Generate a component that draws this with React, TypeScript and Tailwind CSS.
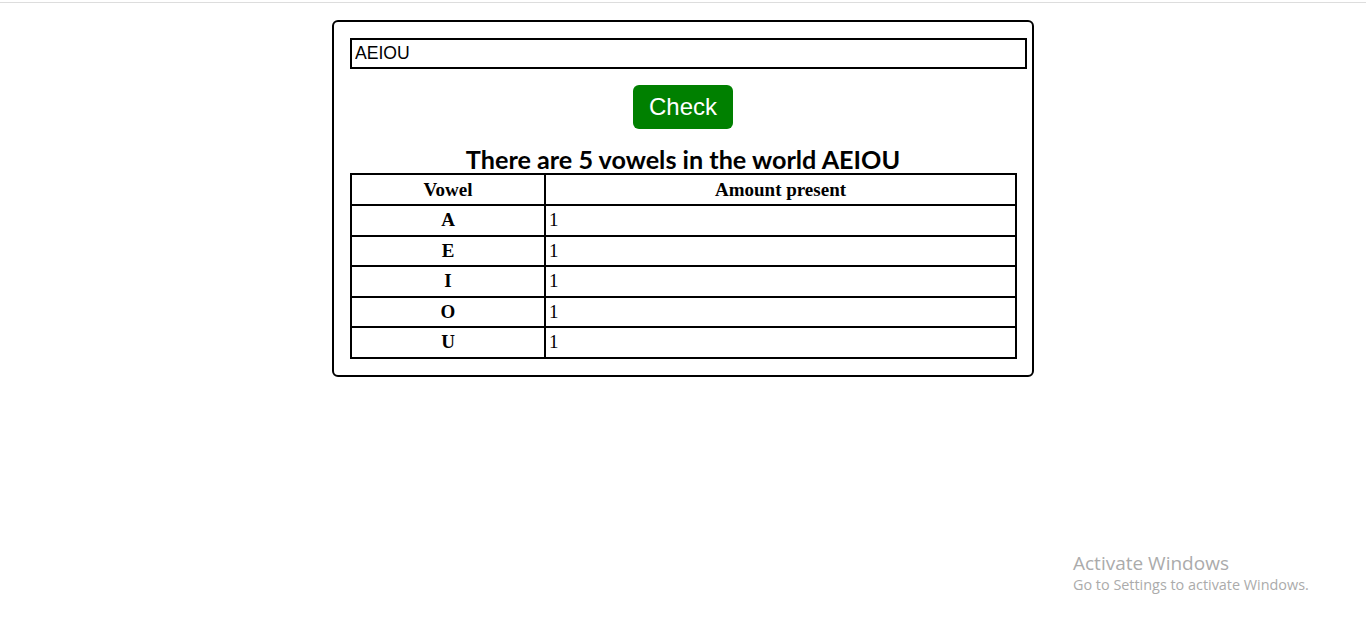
import React, { useState } from 'react';

const countVowels = (word: string) => {
  const vowels = ['A', 'E', 'I', 'O', 'U'];
  const upper = word.toUpperCase();
  return vowels.map(v => ({ vowel: v, count: upper.split('').filter(c => c === v).length }));
};

const App: React.FC = () => {
  const [word, setWord] = useState('AEIOU');
  const [checked, setChecked] = useState('AEIOU');
  const rows = countVowels(checked);
  const total = rows.reduce((s, r) => s + r.count, 0);

  return (
    <div className="relative min-h-[622px] w-full bg-white">
      <div className="h-[3px] border-b border-[#dddddd]"></div>

      <div className="mx-auto mt-[17px] w-[702px] rounded-[6px] border-2 border-black bg-white p-4 pr-[5px]">
        <input
          value={word}
          onChange={e => setWord(e.target.value)}
          className="block h-[31px] w-[677px] border-2 border-black px-[3px] text-[17.6px] text-black outline-none"
          style={{ fontFamily: 'Arial, "Liberation Sans", sans-serif' }}
        />

        <div className="mt-4 flex w-[666px] justify-center">
          <button
            onClick={() => setChecked(word)}
            className="h-[44px] w-[100px] rounded-[6px] bg-[#008000] text-[24px] text-white"
            style={{ fontFamily: 'Arial, "Liberation Sans", sans-serif' }}
          >
            Check
          </button>
        </div>

        <h2
          className="mt-4 w-[666px] text-center text-[25.2px] font-bold leading-[28px] text-black"
          style={{ fontFamily: 'Lato, "DejaVu Sans", sans-serif' }}
        >
          There are {total} vowels in the world {checked}
        </h2>

        <table
          className="w-[667px] border-collapse border-2 border-black text-[19px] leading-[24px] text-black"
          style={{ fontFamily: '"Liberation Serif", "Times New Roman", serif' }}
        >
          <thead>
            <tr className="h-[31px]">
              <th className="w-[194px] border-2 border-black font-bold">Vowel</th>
              <th className="border-2 border-black font-bold">Amount present</th>
            </tr>
          </thead>
          <tbody>
            {rows.map(r => (
              <tr key={r.vowel} className="h-[30.5px]">
                <th className="border-2 border-black font-bold">{r.vowel}</th>
                <td className="border-2 border-black px-[3px] text-left">{r.count}</td>
              </tr>
            ))}
          </tbody>
        </table>
      </div>

      <div
        className="absolute left-[1073px] top-[551px] text-[#ababab]"
        style={{ fontFamily: '"Open Sans", "Noto Sans", sans-serif' }}
      >
        <div className="text-[19px] leading-[24px]">Activate Windows</div>
        <div className="text-[14.4px] leading-[20px]">Go to Settings to activate Windows.</div>
      </div>
    </div>
  );
};

export default App;
